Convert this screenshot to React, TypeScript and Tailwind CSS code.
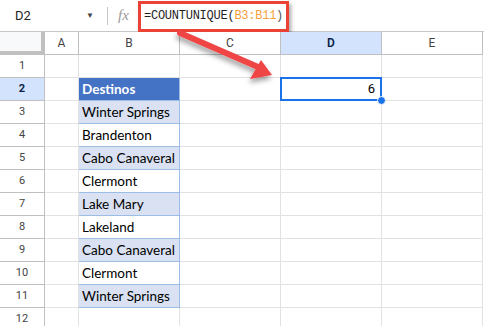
const cols = ["A", "B", "C", "D", "E"];
const colW = [34, 101, 101, 101, 101];

const destinos: Record<number, string> = {
  2: "Destinos",
  3: "Winter Springs",
  4: "Brandenton",
  5: "Cabo Canaveral",
  6: "Clermont",
  7: "Lake Mary",
  8: "Lakeland",
  9: "Cabo Canaveral",
  10: "Clermont",
  11: "Winter Springs",
};

const rows = [1, 2, 3, 4, 5, 6, 7, 8, 9, 10, 11, 12];

function Cell({ row, col }: { row: number; col: string }) {
  const text = col === "B" ? destinos[row] : undefined;

  // Tabla de destinos
  if (col === "B" && row >= 2 && row <= 11) {
    let bg = "bg-white";
    if (row === 2) bg = "bg-[#4472c4]";
    else if (row % 2 === 1) bg = "bg-[#d9e1f2]";
    return (
      <div
        className={`h-[23px] border-r border-b border-[#9dbde4] flex items-center pl-[3px] text-[13.5px] font-['Lato',sans-serif] whitespace-nowrap overflow-hidden ${bg} ${
          row === 2 ? "text-white font-bold" : "text-black"
        }`}
      >
        {text}
      </div>
    );
  }

  if (col === "D" && row === 2) {
    return (
      <div className="relative h-[23px] border-r border-b border-[#e2e2e2]">
        <div className="absolute -left-px -top-px w-[102px] h-[24px] border-2 border-[#1a73e8] flex items-center justify-end pr-[5px] text-[13px] font-['Roboto',sans-serif] text-black">
          6
        </div>
        <div className="absolute right-[-5px] bottom-[-5px] w-[9px] h-[9px] rounded-full bg-[#1a73e8] border border-white" />
      </div>
    );
  }

  return <div className="h-[23px] border-r border-b border-[#e2e2e2] bg-white" />;
}

export default function App() {
  return (
    <div className="relative w-[484px] h-[326px] overflow-hidden bg-white font-['Roboto',sans-serif]">
      {/* Formula bar */}
      <div className="h-[32px] flex items-center border-b border-[#c7c7c7]">
        <div className="w-[107px] flex items-center pl-[15px] pr-[13px]">
          <span className="text-[13px] text-[#1f1f1f]">D2</span>
          <span className="ml-auto text-[8px] text-[#444]">▼</span>
        </div>
        <div className="w-px h-[18px] bg-[#c7c7c7]" />
        <span className="ml-[10px] w-[20px] text-[15px] italic text-[#9a9a9a] font-['Liberation_Serif',serif]">
          fx
        </span>
        <div className="mt-[1px] h-[31px] flex items-center pl-[3px] pr-[3px] border-[3px] border-[#ea4335] shadow-[2px_3px_4px_rgba(0,0,0,0.35)] font-['Liberation_Mono',monospace] text-[12px] tracking-[-0.25px]">
          <span className="text-[#1f1f1f]">=COUNTUNIQUE(</span>
          <span className="text-[#f4a13c]">B3:B11</span>
          <span className="text-[#555]">)</span>
        </div>
      </div>

      {/* Grid */}
      <div className="grid grid-cols-[45px_34px_101px_101px_101px_101px]">
        <div className="h-[23px] bg-[#f8f9fa] border-r-4 border-b-4 border-[#c0c0c0]" />
        {cols.map((c, i) => (
          <div
            key={c}
            className={`h-[23px] border-r border-b border-[#c0c0c0] flex items-center justify-center text-[12px] ${
              c === "D" ? "bg-[#d3e3fd] text-[#0b1f4a] font-semibold" : "bg-white text-[#444]"
            }`}
            style={{ width: colW[i] }}
          >
            {c}
          </div>
        ))}

        {rows.map((r) => (
          <div key={r} className="contents">
            <div
              className={`h-[23px] border-r border-b border-[#c0c0c0] flex items-center justify-center text-[11px] ${
                r === 2 ? "bg-[#d3e3fd] text-[#0b1f4a] font-bold" : "bg-white text-[#444]"
              }`}
            >
              {r}
            </div>
            {cols.map((c) => (
              <Cell key={c} row={r} col={c} />
            ))}
          </div>
        ))}
      </div>

      {/* Arrow */}
      <svg className="absolute left-0 top-0 pointer-events-none" width="484" height="326">
        <defs>
          <filter id="sh" x="-20%" y="-20%" width="140%" height="160%">
            <feDropShadow dx="-1" dy="4" stdDeviation="2.5" floodColor="#000" floodOpacity="0.35" />
          </filter>
        </defs>
        <g filter="url(#sh)" fill="#ef4444">
          <line x1="180" y1="33" x2="258" y2="67" stroke="#ef4444" strokeWidth="6" strokeLinecap="round" />
          <polygon points="272,75 250,79 261,60" />
        </g>
      </svg>
    </div>
  );
}
